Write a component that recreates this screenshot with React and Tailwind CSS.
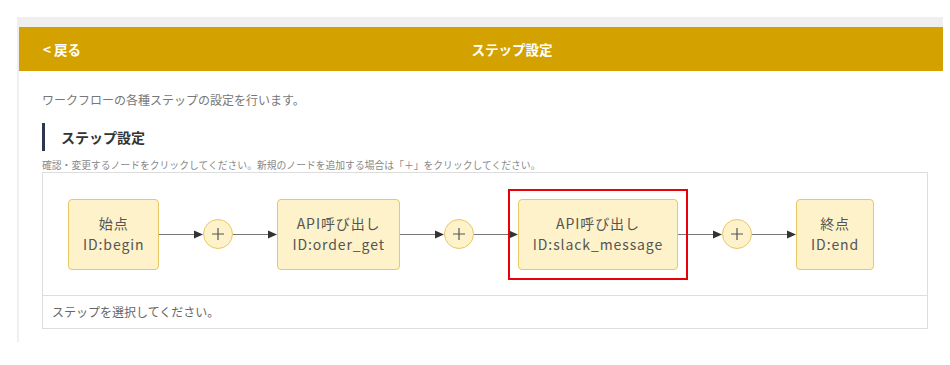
import React from 'react';

const font = { fontFamily: '"Noto Sans CJK JP", "Noto Sans", sans-serif' };

const Node = ({ title, id, selected }) => (
  <div className="relative shrink-0">
    {selected && <span className="absolute -inset-[10px] border-2 border-[#e8000b]" />}
    <div className="relative flex h-[71px] flex-col items-center justify-center rounded-[4px] border border-[#e9c764] bg-[#fdf2c9] px-[14px] text-[14px] leading-[21px] tracking-[0.9px] text-[#555]">
      <div>{title}</div>
      <div>ID:{id}</div>
    </div>
  </div>
);

const Arrow = () => (
  <div className="flex w-[44px] shrink-0 items-center">
    <div className="h-px flex-1 bg-[#777]" />
    <svg width="9" height="9" viewBox="0 0 9 9" className="shrink-0">
      <path d="M0 0.5 L9 4.5 L0 8.5 Z" fill="#333" />
    </svg>
  </div>
);

const AddButton = () => (
  <button className="flex h-[30px] w-[30px] shrink-0 items-center justify-center rounded-full border border-[#e9c764] bg-[#fdf2c9]">
    <svg width="14" height="14" viewBox="0 0 14 14">
      <path d="M7 1 V13 M1 7 H13" stroke="#555" strokeWidth="1.2" />
    </svg>
  </button>
);

const steps = [
  { title: '始点', id: 'begin' },
  { title: 'API呼び出し', id: 'order_get' },
  { title: 'API呼び出し', id: 'slack_message', selected: true },
  { title: '終点', id: 'end' },
];

export default function App() {
  return (
    <div className="min-h-[365px] bg-white pl-[17px] pt-[17px]" style={font}>
      <div className="h-[325px] w-[926px] border-l-2 border-t-[10px] border-[#efefef]">
        <div className="flex h-[44px] items-center bg-[#d4a200] pl-[24px] text-[13.5px] font-bold text-white">
          <button className="font-bold">&lt;&nbsp;戻る</button>
          <div className="flex-1 text-center">ステップ設定</div>
        </div>

        <div className="pl-[23px] pr-[15px] pt-[20px]">
          <p className="text-[12px] leading-[18px] text-[#777]">ワークフローの各種ステップの設定を行います。</p>

          <div className="mt-[14px] flex h-[28px] items-center border-l-[3px] border-[#2b3650] pl-[16px]">
            <h2 className="text-[14px] font-bold text-[#333]">ステップ設定</h2>
          </div>

          <p className="mt-[7px] text-[9.8px] leading-[14px] text-[#888]">
            確認・変更するノードをクリックしてください。新規のノードを追加する場合は「＋」をクリックしてください。
          </p>

          <div className="border border-[#ddd]">
            <div className="flex h-[122px] items-center pl-[25px]">
              {steps.map((s, i) => (
                <React.Fragment key={s.id}>
                  <Node {...s} />
                  {i < steps.length - 1 && (
                    <>
                      <Arrow />
                      <AddButton />
                      <Arrow />
                    </>
                  )}
                </React.Fragment>
              ))}
            </div>
            <div className="flex h-[33px] items-center border-t border-[#ddd] px-[9px] text-[12px] text-[#666]">
              ステップを選択してください。
            </div>
          </div>
        </div>
      </div>
    </div>
  );
}
